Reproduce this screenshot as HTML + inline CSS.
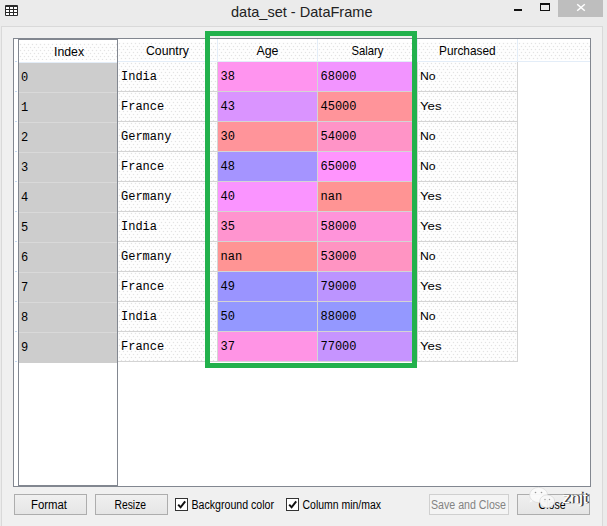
<!DOCTYPE html>
<html><head><meta charset="utf-8"><title>data_set - DataFrame</title><style>
*{margin:0;padding:0;box-sizing:border-box}
html,body{width:607px;height:526px;overflow:hidden;background:#ebebeb;font-family:"Liberation Sans",sans-serif;position:relative}
.a{position:absolute}
.dots{background-color:#fefefe;background-image:radial-gradient(circle at 1.5px 1.5px,#e3e3e3 0.3px,rgba(254,254,254,0) 1.1px),radial-gradient(circle at 1.5px 1.5px,#e3e3e3 0.3px,rgba(254,254,254,0) 1.1px);background-size:4px 6px,4px 6px;background-position:0 0,2px 3px}
.btn{border:1px solid #adadad;background:linear-gradient(#f0f0f0,#e5e5e5)}
.cb{width:13px;height:13px;border:1px solid #333;background:#fff}
.g{background:#d4d4d4}
</style></head><body>
<svg class="a" style="left:0;top:0" width="24" height="20"><rect x="5" y="5" width="13" height="11" rx="1" fill="#2b2b2b"/><rect x="6" y="7" width="3" height="2" fill="#fff"/><rect x="6" y="10" width="3" height="2" fill="#fff"/><rect x="6" y="13" width="3" height="2" fill="#fff"/><rect x="10" y="7" width="3" height="2" fill="#fff"/><rect x="10" y="10" width="3" height="2" fill="#fff"/><rect x="10" y="13" width="3" height="2" fill="#fff"/><rect x="14" y="7" width="3" height="2" fill="#fff"/><rect x="14" y="10" width="3" height="2" fill="#fff"/><rect x="14" y="13" width="3" height="2" fill="#fff"/></svg>
<div class="a" style="left:514px;top:9px;width:8px;height:2px;background:#111"></div>
<div class="a" style="left:540px;top:3px;width:10px;height:8px;border:1px solid #111;border-top-width:2px"></div>
<div class="a" style="left:558px;top:0;width:45px;height:17px;background:#bebebe"></div>
<svg class="a" style="left:576px;top:3px" width="10" height="9"><path d="M1.2 1.2L8.8 7.8M8.8 1.2L1.2 7.8" stroke="#fff" stroke-width="1.5"/></svg>
<div class="a" style="left:1px;top:26px;width:602px;height:510px;background:#f0f0f0;border:1px solid #d9d9d9"></div>
<div class="a" style="left:13px;top:38px;width:578px;height:449px;background:#fff;border:1px solid #828790"></div>
<div class="a" style="left:14px;top:39px;width:576px;height:22px;background:#fff"></div>
<div class="a dots" style="left:14px;top:42px;width:576px;height:18px"></div>
<div class="a" style="left:14px;top:61px;width:576px;height:1px;background:#e3edf8"></div>
<div class="a" style="left:217px;top:39px;width:1px;height:22px;background:#e3edf8"></div>
<div class="a" style="left:317px;top:39px;width:1px;height:22px;background:#e3edf8"></div>
<div class="a" style="left:417px;top:39px;width:1px;height:22px;background:#e3edf8"></div>
<div class="a" style="left:517px;top:39px;width:1px;height:22px;background:#e3edf8"></div>
<div class="a dots" style="left:118px;top:62px;width:99px;height:29px"></div>
<div class="a" style="left:218px;top:62px;width:99px;height:29px;background:#ff94ef"></div>
<div class="a" style="left:318px;top:62px;width:99px;height:29px;background:#f294ff"></div>
<div class="a dots" style="left:418px;top:62px;width:99px;height:29px"></div>
<div class="a g" style="left:118px;top:91px;width:400px;height:1px"></div>
<div class="a dots" style="left:118px;top:92px;width:99px;height:29px"></div>
<div class="a" style="left:218px;top:92px;width:99px;height:29px;background:#da94ff"></div>
<div class="a" style="left:318px;top:92px;width:99px;height:29px;background:#ff949a"></div>
<div class="a dots" style="left:418px;top:92px;width:99px;height:29px"></div>
<div class="a g" style="left:118px;top:121px;width:400px;height:1px"></div>
<div class="a dots" style="left:118px;top:122px;width:99px;height:29px"></div>
<div class="a" style="left:218px;top:122px;width:99px;height:29px;background:#ff949a"></div>
<div class="a" style="left:318px;top:122px;width:99px;height:29px;background:#ff94c7"></div>
<div class="a dots" style="left:418px;top:122px;width:99px;height:29px"></div>
<div class="a g" style="left:118px;top:151px;width:400px;height:1px"></div>
<div class="a dots" style="left:118px;top:152px;width:99px;height:29px"></div>
<div class="a" style="left:218px;top:152px;width:99px;height:29px;background:#a594ff"></div>
<div class="a" style="left:318px;top:152px;width:99px;height:29px;background:#ff94fd"></div>
<div class="a dots" style="left:418px;top:152px;width:99px;height:29px"></div>
<div class="a g" style="left:118px;top:181px;width:400px;height:1px"></div>
<div class="a dots" style="left:118px;top:182px;width:99px;height:29px"></div>
<div class="a" style="left:218px;top:182px;width:99px;height:29px;background:#fa94ff"></div>
<div class="a" style="left:318px;top:182px;width:99px;height:29px;background:#ff9494"></div>
<div class="a dots" style="left:418px;top:182px;width:99px;height:29px"></div>
<div class="a g" style="left:118px;top:211px;width:400px;height:1px"></div>
<div class="a dots" style="left:118px;top:212px;width:99px;height:29px"></div>
<div class="a" style="left:218px;top:212px;width:99px;height:29px;background:#ff94cf"></div>
<div class="a" style="left:318px;top:212px;width:99px;height:29px;background:#ff94da"></div>
<div class="a dots" style="left:418px;top:212px;width:99px;height:29px"></div>
<div class="a g" style="left:118px;top:241px;width:400px;height:1px"></div>
<div class="a dots" style="left:118px;top:242px;width:99px;height:29px"></div>
<div class="a" style="left:218px;top:242px;width:99px;height:29px;background:#ff9494"></div>
<div class="a" style="left:318px;top:242px;width:99px;height:29px;background:#ff94c2"></div>
<div class="a dots" style="left:418px;top:242px;width:99px;height:29px"></div>
<div class="a g" style="left:118px;top:271px;width:400px;height:1px"></div>
<div class="a dots" style="left:118px;top:272px;width:99px;height:29px"></div>
<div class="a" style="left:218px;top:272px;width:99px;height:29px;background:#9a94ff"></div>
<div class="a" style="left:318px;top:272px;width:99px;height:29px;background:#bc94ff"></div>
<div class="a dots" style="left:418px;top:272px;width:99px;height:29px"></div>
<div class="a g" style="left:118px;top:301px;width:400px;height:1px"></div>
<div class="a dots" style="left:118px;top:302px;width:99px;height:29px"></div>
<div class="a" style="left:218px;top:302px;width:99px;height:29px;background:#9498ff"></div>
<div class="a" style="left:318px;top:302px;width:99px;height:29px;background:#9498ff"></div>
<div class="a dots" style="left:418px;top:302px;width:99px;height:29px"></div>
<div class="a g" style="left:118px;top:331px;width:400px;height:1px"></div>
<div class="a dots" style="left:118px;top:332px;width:99px;height:29px"></div>
<div class="a" style="left:218px;top:332px;width:99px;height:29px;background:#ff94e5"></div>
<div class="a" style="left:318px;top:332px;width:99px;height:29px;background:#c694ff"></div>
<div class="a dots" style="left:418px;top:332px;width:99px;height:29px"></div>
<div class="a g" style="left:118px;top:361px;width:400px;height:1px"></div>
<div class="a g" style="left:217px;top:62px;width:1px;height:300px"></div>
<div class="a g" style="left:317px;top:62px;width:1px;height:300px"></div>
<div class="a g" style="left:417px;top:62px;width:1px;height:300px"></div>
<div class="a g" style="left:517px;top:62px;width:1px;height:300px"></div>
<div class="a" style="left:14px;top:39px;width:4px;height:447px;background:#fff"></div>
<div class="a" style="left:15px;top:61px;width:2px;height:1px;background:#c5d9f1"></div>
<div class="a" style="left:15px;top:91px;width:2px;height:1px;background:#c5d9f1"></div>
<div class="a" style="left:15px;top:121px;width:2px;height:1px;background:#c5d9f1"></div>
<div class="a" style="left:15px;top:151px;width:2px;height:1px;background:#c5d9f1"></div>
<div class="a" style="left:15px;top:181px;width:2px;height:1px;background:#c5d9f1"></div>
<div class="a" style="left:15px;top:211px;width:2px;height:1px;background:#c5d9f1"></div>
<div class="a" style="left:15px;top:241px;width:2px;height:1px;background:#c5d9f1"></div>
<div class="a" style="left:15px;top:271px;width:2px;height:1px;background:#c5d9f1"></div>
<div class="a" style="left:15px;top:301px;width:2px;height:1px;background:#c5d9f1"></div>
<div class="a" style="left:15px;top:331px;width:2px;height:1px;background:#c5d9f1"></div>
<div class="a" style="left:15px;top:361px;width:2px;height:1px;background:#c5d9f1"></div>
<div class="a" style="left:18px;top:39px;width:100px;height:447px;background:#fff;border:1px solid #828790"></div>
<div class="a dots" style="left:19px;top:43px;width:98px;height:17px"></div>
<div class="a" style="left:19px;top:62px;width:98px;height:1px;background:#e3edf8"></div>
<div class="a" style="left:19px;top:63px;width:98px;height:300px;background:#cdcdcd"></div>
<div class="a" style="left:19px;top:92px;width:98px;height:1px;background:#d9d9d9"></div>
<div class="a" style="left:19px;top:122px;width:98px;height:1px;background:#d9d9d9"></div>
<div class="a" style="left:19px;top:152px;width:98px;height:1px;background:#d9d9d9"></div>
<div class="a" style="left:19px;top:182px;width:98px;height:1px;background:#d9d9d9"></div>
<div class="a" style="left:19px;top:212px;width:98px;height:1px;background:#d9d9d9"></div>
<div class="a" style="left:19px;top:242px;width:98px;height:1px;background:#d9d9d9"></div>
<div class="a" style="left:19px;top:272px;width:98px;height:1px;background:#d9d9d9"></div>
<div class="a" style="left:19px;top:302px;width:98px;height:1px;background:#d9d9d9"></div>
<div class="a" style="left:19px;top:332px;width:98px;height:1px;background:#d9d9d9"></div>
<div class="a" style="left:205px;top:31px;width:212px;height:337px;border:5px solid #22b14c"></div>
<div class="a btn" style="left:14px;top:494px;width:73px;height:21px"></div>
<div class="a btn" style="left:95px;top:494px;width:73px;height:21px"></div>
<div class="a btn" style="left:429px;top:494px;width:80px;height:21px;border-color:#d0d0d0;background:#f4f4f4"></div>
<div class="a btn" style="left:517px;top:494px;width:73px;height:21px"></div>
<div class="a cb" style="left:175px;top:498px"><svg width="11" height="11" style="position:absolute;left:0;top:0"><path d="M2.2 5.6L4.6 8.3L9.2 2.4" stroke="#111" stroke-width="2" fill="none"/></svg></div>
<div class="a cb" style="left:286px;top:498px"><svg width="11" height="11" style="position:absolute;left:0;top:0"><path d="M2.2 5.6L4.6 8.3L9.2 2.4" stroke="#111" stroke-width="2" fill="none"/></svg></div>
<svg class="a" style="left:0;top:0" width="607" height="526">
<text x="231.00" y="17.00" font-family="Liberation Sans" font-size="15" fill="#222222" textLength="141.51" lengthAdjust="spacingAndGlyphs">data_set - DataFrame</text>
<text x="54.00" y="56.00" font-family="Liberation Sans" font-size="13" fill="#000000" textLength="30.11" lengthAdjust="spacingAndGlyphs">Index</text>
<text x="146.00" y="55.00" font-family="Liberation Sans" font-size="13" fill="#000000" textLength="43.00" lengthAdjust="spacingAndGlyphs">Country</text>
<text x="256.50" y="55.00" font-family="Liberation Sans" font-size="13" fill="#000000" textLength="22.00" lengthAdjust="spacingAndGlyphs">Age</text>
<text x="351.50" y="55.00" font-family="Liberation Sans" font-size="13" fill="#000000" textLength="32.00" lengthAdjust="spacingAndGlyphs">Salary</text>
<text x="439.00" y="55.00" font-family="Liberation Sans" font-size="13" fill="#000000" textLength="56.54" lengthAdjust="spacingAndGlyphs">Purchased</text>
<text x="31.00" y="509.00" font-family="Liberation Sans" font-size="12" fill="#000000" textLength="36.02" lengthAdjust="spacingAndGlyphs">Format</text>
<text x="114.50" y="509.00" font-family="Liberation Sans" font-size="12" fill="#000000" textLength="31.54" lengthAdjust="spacingAndGlyphs">Resize</text>
<text x="191.50" y="509.00" font-family="Liberation Sans" font-size="12" fill="#000000" textLength="82.51" lengthAdjust="spacingAndGlyphs">Background color</text>
<text x="302.50" y="509.00" font-family="Liberation Sans" font-size="12" fill="#000000" textLength="78.51" lengthAdjust="spacingAndGlyphs">Column min/max</text>
<text x="431.00" y="509.00" font-family="Liberation Sans" font-size="12" fill="#838383" textLength="75.04" lengthAdjust="spacingAndGlyphs">Save and Close</text>
<text x="538.50" y="509.00" font-family="Liberation Sans" font-size="12" fill="#000000" textLength="27.09" lengthAdjust="spacingAndGlyphs">Close</text>
<text x="21.00" y="81.00" font-family="Liberation Mono" font-size="12" fill="#000000">0</text>
<text x="121.00" y="80.00" font-family="Liberation Mono" font-size="12" fill="#000000">India</text>
<text x="220.50" y="80.00" font-family="Liberation Mono" font-size="12" fill="#000000">38</text>
<text x="320.50" y="80.00" font-family="Liberation Mono" font-size="12" fill="#000000">68000</text>
<text x="420.00" y="80.00" font-family="Liberation Sans" font-size="11.75" fill="#000000" textLength="15.66" lengthAdjust="spacingAndGlyphs">No</text>
<text x="21.00" y="111.00" font-family="Liberation Mono" font-size="12" fill="#000000">1</text>
<text x="121.00" y="110.00" font-family="Liberation Mono" font-size="12" fill="#000000">France</text>
<text x="220.50" y="110.00" font-family="Liberation Mono" font-size="12" fill="#000000">43</text>
<text x="320.50" y="110.00" font-family="Liberation Mono" font-size="12" fill="#000000">45000</text>
<text x="420.00" y="110.00" font-family="Liberation Sans" font-size="11.75" fill="#000000" textLength="21.53" lengthAdjust="spacingAndGlyphs">Yes</text>
<text x="21.00" y="141.00" font-family="Liberation Mono" font-size="12" fill="#000000">2</text>
<text x="121.00" y="140.00" font-family="Liberation Mono" font-size="12" fill="#000000">Germany</text>
<text x="220.50" y="140.00" font-family="Liberation Mono" font-size="12" fill="#000000">30</text>
<text x="320.50" y="140.00" font-family="Liberation Mono" font-size="12" fill="#000000">54000</text>
<text x="420.00" y="140.00" font-family="Liberation Sans" font-size="11.75" fill="#000000" textLength="15.66" lengthAdjust="spacingAndGlyphs">No</text>
<text x="21.00" y="171.00" font-family="Liberation Mono" font-size="12" fill="#000000">3</text>
<text x="121.00" y="170.00" font-family="Liberation Mono" font-size="12" fill="#000000">France</text>
<text x="220.50" y="170.00" font-family="Liberation Mono" font-size="12" fill="#000000">48</text>
<text x="320.50" y="170.00" font-family="Liberation Mono" font-size="12" fill="#000000">65000</text>
<text x="420.00" y="170.00" font-family="Liberation Sans" font-size="11.75" fill="#000000" textLength="15.66" lengthAdjust="spacingAndGlyphs">No</text>
<text x="21.00" y="201.00" font-family="Liberation Mono" font-size="12" fill="#000000">4</text>
<text x="121.00" y="200.00" font-family="Liberation Mono" font-size="12" fill="#000000">Germany</text>
<text x="220.50" y="200.00" font-family="Liberation Mono" font-size="12" fill="#000000">40</text>
<text x="320.50" y="200.00" font-family="Liberation Mono" font-size="12" fill="#000000">nan</text>
<text x="420.00" y="200.00" font-family="Liberation Sans" font-size="11.75" fill="#000000" textLength="21.53" lengthAdjust="spacingAndGlyphs">Yes</text>
<text x="21.00" y="231.00" font-family="Liberation Mono" font-size="12" fill="#000000">5</text>
<text x="121.00" y="230.00" font-family="Liberation Mono" font-size="12" fill="#000000">India</text>
<text x="220.50" y="230.00" font-family="Liberation Mono" font-size="12" fill="#000000">35</text>
<text x="320.50" y="230.00" font-family="Liberation Mono" font-size="12" fill="#000000">58000</text>
<text x="420.00" y="230.00" font-family="Liberation Sans" font-size="11.75" fill="#000000" textLength="21.53" lengthAdjust="spacingAndGlyphs">Yes</text>
<text x="21.00" y="261.00" font-family="Liberation Mono" font-size="12" fill="#000000">6</text>
<text x="121.00" y="260.00" font-family="Liberation Mono" font-size="12" fill="#000000">Germany</text>
<text x="220.50" y="260.00" font-family="Liberation Mono" font-size="12" fill="#000000">nan</text>
<text x="320.50" y="260.00" font-family="Liberation Mono" font-size="12" fill="#000000">53000</text>
<text x="420.00" y="260.00" font-family="Liberation Sans" font-size="11.75" fill="#000000" textLength="15.66" lengthAdjust="spacingAndGlyphs">No</text>
<text x="21.00" y="291.00" font-family="Liberation Mono" font-size="12" fill="#000000">7</text>
<text x="121.00" y="290.00" font-family="Liberation Mono" font-size="12" fill="#000000">France</text>
<text x="220.50" y="290.00" font-family="Liberation Mono" font-size="12" fill="#000000">49</text>
<text x="320.50" y="290.00" font-family="Liberation Mono" font-size="12" fill="#000000">79000</text>
<text x="420.00" y="290.00" font-family="Liberation Sans" font-size="11.75" fill="#000000" textLength="21.53" lengthAdjust="spacingAndGlyphs">Yes</text>
<text x="21.00" y="321.00" font-family="Liberation Mono" font-size="12" fill="#000000">8</text>
<text x="121.00" y="320.00" font-family="Liberation Mono" font-size="12" fill="#000000">India</text>
<text x="220.50" y="320.00" font-family="Liberation Mono" font-size="12" fill="#000000">50</text>
<text x="320.50" y="320.00" font-family="Liberation Mono" font-size="12" fill="#000000">88000</text>
<text x="420.00" y="320.00" font-family="Liberation Sans" font-size="11.75" fill="#000000" textLength="15.66" lengthAdjust="spacingAndGlyphs">No</text>
<text x="21.00" y="351.00" font-family="Liberation Mono" font-size="12" fill="#000000">9</text>
<text x="121.00" y="350.00" font-family="Liberation Mono" font-size="12" fill="#000000">France</text>
<text x="220.50" y="350.00" font-family="Liberation Mono" font-size="12" fill="#000000">37</text>
<text x="320.50" y="350.00" font-family="Liberation Mono" font-size="12" fill="#000000">77000</text>
<text x="420.00" y="350.00" font-family="Liberation Sans" font-size="11.75" fill="#000000" textLength="21.53" lengthAdjust="spacingAndGlyphs">Yes</text>
</svg>
<svg class="a" style="left:525px;top:482px" width="70" height="30"><path d="M6 17 L4.5 20.5 L9 18.5 Z" fill="#fafafa"/><ellipse cx="13.6" cy="13" rx="9" ry="7.6" fill="#fafafa" fill-opacity="0.95" stroke="#d6d6d6" stroke-width="0.6"/><circle cx="10.5" cy="10.5" r="0.8" fill="#999"/><circle cx="16.5" cy="10.5" r="0.8" fill="#999"/><ellipse cx="22.2" cy="19.3" rx="7.5" ry="6.4" fill="#f8f8f8" fill-opacity="0.95" stroke="#d0d0d0" stroke-width="0.6"/><circle cx="20" cy="17.5" r="0.7" fill="#999"/><circle cx="24.5" cy="17.5" r="0.7" fill="#999"/><text x="38.4" y="21.4" font-family="Liberation Sans" font-size="14.5" fill="#3a3a3a" stroke="#3a3a3a" stroke-width="0.5" textLength="25.5" lengthAdjust="spacingAndGlyphs">znjt</text><text x="37" y="20.5" font-family="Liberation Sans" font-size="14.5" fill="#fff" textLength="25.5" lengthAdjust="spacingAndGlyphs">znjt</text></svg>
</body></html>
